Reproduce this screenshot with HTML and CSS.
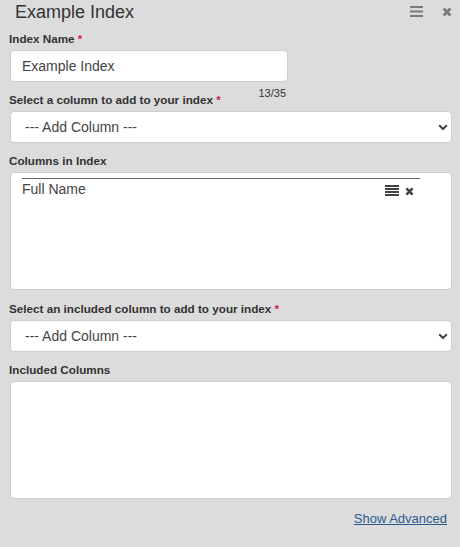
FILE: index.html
```html
<!DOCTYPE html>
<html lang="en">
<head>
<meta charset="utf-8">
<title>Example Index</title>
<link rel="stylesheet" href="styles.css">
</head>
<body>
<div class="panel">
  <div class="header">
    <div class="title">Example Index</div>
    <div class="header-icons">
      <svg class="icon-menu" width="13" height="11" viewBox="0 0 13 11"><rect x="0" y="0" width="13" height="2" /><rect x="0" y="4.5" width="13" height="2" /><rect x="0" y="9" width="13" height="2" /></svg>
      <svg class="icon-close" width="10" height="10" viewBox="0 0 10 10"><path d="M1.6 1.6 L8.4 8.4 M8.4 1.6 L1.6 8.4" /></svg>
    </div>
  </div>
  <form class="form">
    <div class="field field-name">
      <label class="label">Index Name <span class="req">*</span></label>
      <input class="text-input" type="text" value="Example Index">
      <div class="counter">13/35</div>
    </div>
    <div class="field">
      <label class="label">Select a column to add to your index <span class="req">*</span></label>
      <div class="select-wrap">
        <select class="select"><option>--- Add Column ---</option></select>
        <svg class="chev" width="10" height="7" viewBox="0 0 10 7"><path d="M1.2 1.2 L5 5 L8.8 1.2" /></svg>
      </div>
    </div>
    <div class="field field-columns">
      <label class="label">Columns in Index</label>
      <div class="list-box">
        <div class="list-item">
          <span class="item-name">Full Name</span>
          <span class="item-icons">
            <svg width="14" height="11" viewBox="0 0 14 11"><rect x="0" y="0" width="14" height="2" /><rect x="0" y="3" width="14" height="2" /><rect x="0" y="6" width="14" height="2" /><rect x="0" y="9" width="14" height="2" /></svg>
            <svg class="item-x" width="9" height="9" viewBox="0 0 9 9"><path d="M1.4 1.4 L7.6 7.6 M7.6 1.4 L1.4 7.6" /></svg>
          </span>
        </div>
      </div>
    </div>
    <div class="field">
      <label class="label">Select an included column to add to your index <span class="req">*</span></label>
      <div class="select-wrap">
        <select class="select"><option>--- Add Column ---</option></select>
        <svg class="chev" width="10" height="7" viewBox="0 0 10 7"><path d="M1.2 1.2 L5 5 L8.8 1.2" /></svg>
      </div>
    </div>
    <div class="field">
      <label class="label">Included Columns</label>
      <div class="list-box"></div>
    </div>
    <div class="advanced">
      <a class="adv-link" href="#">Show Advanced</a>
    </div>
  </form>
</div>
</body>
</html>
```
FILE: styles.css
```css
* { box-sizing: border-box; }
html, body {
  margin: 0;
  padding: 0;
  background: #dcdcdc;
}
body {
  font-family: "Liberation Sans", Arial, sans-serif;
  color: #333;
  width: 460px;
  height: 547px;
  overflow: hidden;
}
.header {
  display: flex;
  justify-content: space-between;
  align-items: flex-start;
  height: 23px;
  padding: 0 8px 0 15px;
}
.title {
  font-size: 18px;
  line-height: 24px;
  color: #333;
}
.header-icons {
  display: flex;
  align-items: flex-start;
  gap: 19px;
  margin-top: 6px;
}
.icon-menu rect { fill: #7a7a7a; }
.icon-close { margin-top: 1px; }
.icon-close path {
  stroke: #7a7a7a;
  stroke-width: 2.8;
  fill: none;
}
.form {
  margin: 0;
  padding: 8px 8px 0 10px;
}
.field {
  margin-bottom: 10px;
}
.field-name { margin-bottom: 0; }
.field-columns { margin-bottom: 11px; }
.label {
  display: block;
  font-size: 11.7px;
  font-weight: bold;
  line-height: 15px;
  margin: 0 0 4px -1px;
  color: #333;
}
.req { color: #d81b60; }
.text-input {
  display: block;
  width: 278px;
  height: 32px;
  border: 1px solid #cdcdcd;
  border-radius: 4px;
  background: #fff;
  padding: 0 11px;
  font-family: "Liberation Sans", Arial, sans-serif;
  font-size: 14px;
  color: #444;
  outline: none;
}
.counter {
  width: 278px;
  height: 6px;
  margin-top: 4px;
  padding-right: 2px;
  text-align: right;
  font-size: 11px;
  line-height: 14px;
  color: #333;
}
.select-wrap {
  position: relative;
}
.select {
  display: block;
  width: 100%;
  height: 32px;
  -webkit-appearance: none;
  appearance: none;
  border: 1px solid #cdcdcd;
  border-radius: 4px;
  background: #fff;
  padding: 0 30px 0 14px;
  font-family: "Liberation Sans", Arial, sans-serif;
  font-size: 14px;
  color: #444;
  outline: none;
}
.chev {
  position: absolute;
  right: 4px;
  top: 13px;
  pointer-events: none;
}
.chev path {
  stroke: #444;
  stroke-width: 2;
  fill: none;
}
.list-box {
  height: 118px;
  background: #fff;
  border: 1px solid #cdcdcd;
  border-radius: 4px;
  padding: 5px 31px 0 11px;
}
.list-item {
  display: flex;
  justify-content: space-between;
  align-items: flex-start;
  border-top: 1px solid #666;
  line-height: 20px;
  font-size: 14px;
  color: #444;
  padding-right: 6px;
}
.item-icons {
  display: flex;
  align-items: flex-start;
  gap: 6px;
  margin-top: 6px;
}
.item-icons rect { fill: #444; }
.item-x { margin-top: 2px; }
.item-x path {
  stroke: #444;
  stroke-width: 2.6;
  fill: none;
}
.advanced {
  display: flex;
  justify-content: flex-end;
  padding-right: 5px;
  margin-top: 12px;
}
.adv-link {
  font-size: 13px;
  line-height: 15px;
  color: #2b5b8c;
  text-decoration: underline;
}
```
